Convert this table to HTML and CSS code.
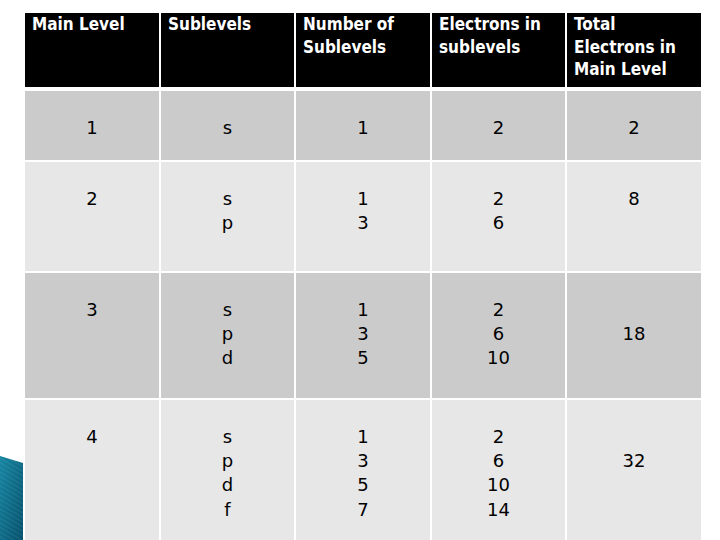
FILE: index.html
```html
<!DOCTYPE html>
<html lang="en">
<head>
<meta charset="utf-8">
<title>Electron sublevels</title>
<link rel="stylesheet" href="styles.css">
</head>
<body>
<svg class="deco" width="24" height="90" viewBox="0 0 24 90" aria-hidden="true">
  <defs>
    <linearGradient id="tealg" x1="0" y1="0" x2="1" y2="1">
      <stop offset="0" stop-color="#1586a3"/>
      <stop offset="1" stop-color="#04506b"/>
    </linearGradient>
    <pattern id="stripes" width="4" height="4" patternUnits="userSpaceOnUse" patternTransform="rotate(-60)">
      <rect width="2" height="4" fill="#ffffff" opacity="0.06"/>
    </pattern>
  </defs>
  <polygon points="0,6 23,13 23,90 0,90" fill="url(#tealg)"/>
  <polygon points="0,6 23,13 23,90 0,90" fill="url(#stripes)"/>
</svg>
<div class="page">
  <div class="grid" role="table">
    <div class="hd" role="columnheader">Main Level</div>
    <div class="hd" role="columnheader">Sublevels</div>
    <div class="hd" role="columnheader">Number of Sublevels</div>
    <div class="hd" role="columnheader">Electrons in sublevels</div>
    <div class="hd" role="columnheader">Total Electrons in Main Level</div>

    <div class="cell dark">1</div>
    <div class="cell dark">s</div>
    <div class="cell dark">1</div>
    <div class="cell dark">2</div>
    <div class="cell dark">2</div>

    <div class="cell light">2</div>
    <div class="cell light">s<br>p</div>
    <div class="cell light">1<br>3</div>
    <div class="cell light">2<br>6</div>
    <div class="cell light">8</div>

    <div class="cell dark">3</div>
    <div class="cell dark">s<br>p<br>d</div>
    <div class="cell dark">1<br>3<br>5</div>
    <div class="cell dark">2<br>6<br>10</div>
    <div class="cell dark"><br>18</div>

    <div class="cell light">4</div>
    <div class="cell light">s<br>p<br>d<br>f</div>
    <div class="cell light">1<br>3<br>5<br>7</div>
    <div class="cell light">2<br>6<br>10<br>14</div>
    <div class="cell light"><br>32</div>
  </div>
</div>
</body>
</html>
```
FILE: styles.css
```css
html, body {
  margin: 0;
  padding: 0;
  background: #ffffff;
  overflow: hidden;
}
body {
  width: 720px;
  height: 540px;
  position: relative;
  font-family: "DejaVu Sans", "Liberation Sans", sans-serif;
  color: #000;
}
.deco {
  position: absolute;
  left: 0;
  top: 450px;
}
.page {
  padding: 13px 0 0 25px;
}
.grid {
  display: grid;
  grid-template-columns: 134px 133px 134px 133px 134px;
  grid-template-rows: 76px 69px 109px 125px 160px;
  column-gap: 2px;
  row-gap: 2px;
}
.hd {
  background: #000;
  color: #fff;
  border-bottom: 2px solid #fff;
  box-sizing: border-box;
  font-family: "DejaVu Sans Condensed", "DejaVu Sans", sans-serif;
  font-stretch: condensed;
  font-weight: bold;
  font-size: 17px;
  line-height: 22.5px;
  padding: 0 6px 0 7px;
}
.cell {
  text-align: center;
  font-size: 18px;
  line-height: 24.2px;
  padding-top: 25px;
  box-sizing: border-box;
}
.dark {
  background: #cbcbcb;
}
.light {
  background: #e7e7e7;
}
```
